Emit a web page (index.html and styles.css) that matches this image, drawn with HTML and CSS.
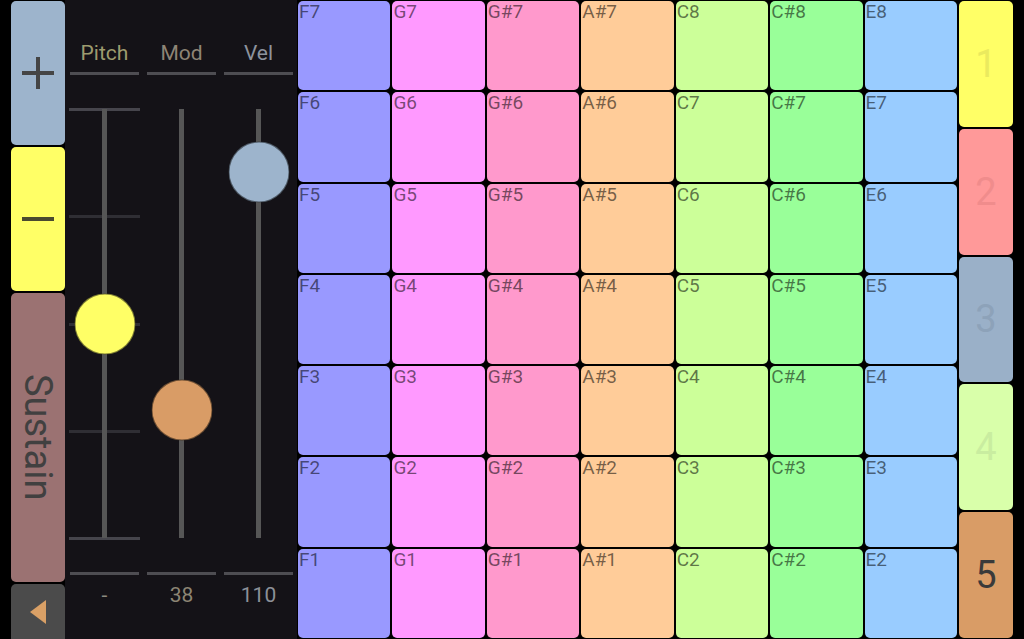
FILE: index.html
```html
<!DOCTYPE html>
<html>
<head>
<meta charset="utf-8">
<link rel="stylesheet" href="styles.css">
</head>
<body>
<div class="app">
  <div class="left-col">
    <div class="btn btn-plus"><span class="plus-h"></span><span class="plus-v"></span></div>
    <div class="btn btn-minus"><span class="minus-h"></span></div>
    <div class="btn btn-sustain"><span class="sustain-label">Sustain</span></div>
    <div class="btn btn-back"><svg width="18" height="26" viewBox="0 0 18 26"><polygon points="1,13 17,1 17,25" fill="#d9a066"/></svg></div>
  </div>

  <div class="panel">
    <div class="scol scol-pitch">
      <div class="shead">Pitch</div>
      <div class="sline"></div>
      <div class="sarea">
        <div class="strack">
          <div class="tick tick-end" style="top:0%"></div>
          <div class="tick" style="top:25%"></div>
          <div class="tick" style="top:50%"></div>
          <div class="tick" style="top:75%"></div>
          <div class="tick tick-end" style="top:100%"></div>
          <div class="sbar"></div>
          <div class="knob knob-pitch" style="top:50%"></div>
        </div>
      </div>
      <div class="sline"></div>
      <div class="sval">-</div>
    </div>
    <div class="scol scol-mod">
      <div class="shead">Mod</div>
      <div class="sline"></div>
      <div class="sarea">
        <div class="strack">
          <div class="sbar"></div>
          <div class="knob knob-mod" style="top:70.1%"></div>
        </div>
      </div>
      <div class="sline"></div>
      <div class="sval">38</div>
    </div>
    <div class="scol scol-vel">
      <div class="shead">Vel</div>
      <div class="sline"></div>
      <div class="sarea">
        <div class="strack">
          <div class="sbar"></div>
          <div class="knob knob-vel" style="top:14.6%"></div>
        </div>
      </div>
      <div class="sline"></div>
      <div class="sval">110</div>
    </div>
  </div>

  <div class="grid">
    <div class="pad c-f">F7</div><div class="pad c-g">G7</div><div class="pad c-gs">G#7</div><div class="pad c-as">A#7</div><div class="pad c-c">C8</div><div class="pad c-cs">C#8</div><div class="pad c-e">E8</div>
    <div class="pad c-f">F6</div><div class="pad c-g">G6</div><div class="pad c-gs">G#6</div><div class="pad c-as">A#6</div><div class="pad c-c">C7</div><div class="pad c-cs">C#7</div><div class="pad c-e">E7</div>
    <div class="pad c-f">F5</div><div class="pad c-g">G5</div><div class="pad c-gs">G#5</div><div class="pad c-as">A#5</div><div class="pad c-c">C6</div><div class="pad c-cs">C#6</div><div class="pad c-e">E6</div>
    <div class="pad c-f">F4</div><div class="pad c-g">G4</div><div class="pad c-gs">G#4</div><div class="pad c-as">A#4</div><div class="pad c-c">C5</div><div class="pad c-cs">C#5</div><div class="pad c-e">E5</div>
    <div class="pad c-f">F3</div><div class="pad c-g">G3</div><div class="pad c-gs">G#3</div><div class="pad c-as">A#3</div><div class="pad c-c">C4</div><div class="pad c-cs">C#4</div><div class="pad c-e">E4</div>
    <div class="pad c-f">F2</div><div class="pad c-g">G2</div><div class="pad c-gs">G#2</div><div class="pad c-as">A#2</div><div class="pad c-c">C3</div><div class="pad c-cs">C#3</div><div class="pad c-e">E3</div>
    <div class="pad c-f">F1</div><div class="pad c-g">G1</div><div class="pad c-gs">G#1</div><div class="pad c-as">A#1</div><div class="pad c-c">C2</div><div class="pad c-cs">C#2</div><div class="pad c-e">E2</div>
  </div>

  <div class="right-col">
    <div class="rbtn r1">1</div>
    <div class="rbtn r2">2</div>
    <div class="rbtn r3">3</div>
    <div class="rbtn r4">4</div>
    <div class="rbtn r5">5</div>
  </div>
</div>
</body>
</html>
```

FILE: styles.css
```css
* { box-sizing: border-box; }
html, body {
  margin: 0;
  padding: 0;
  background: #000;
  font-family: Roboto, "Liberation Sans", sans-serif;
}
.app {
  display: flex;
  width: 1024px;
  height: 639px;
  overflow: hidden;
  background: #000;
}

/* left column */
.left-col {
  width: 54px;
  margin-left: 11px;
  padding-top: 1px;
  display: flex;
  flex-direction: column;
  gap: 2px;
  flex: 0 0 auto;
}
.btn {
  border-radius: 5px;
  display: flex;
  align-items: center;
  justify-content: center;
  position: relative;
}
.btn-plus { height: 144px; background: #9db4cc; }
.btn-minus { height: 144px; background: #ffff66; }
.btn-sustain { height: 289px; background: #9b7272; }
.btn-back { flex: 1; background: #4b4b4b; border-radius: 5px 5px 0 0; }
.btn-back svg { display: block; }

.plus-h, .minus-h {
  position: absolute;
  left: 11px;
  width: 32px;
  height: 4px;
  top: 50%;
  margin-top: -2px;
  background: #454545;
}
.minus-h { background: #4a4a30; }
.plus-v {
  position: absolute;
  left: 50%;
  margin-left: -2px;
  width: 4px;
  height: 32px;
  top: 50%;
  margin-top: -16px;
  background: #454545;
}
.sustain-label {
  writing-mode: vertical-rl;
  font-size: 38px;
  color: #414040;
  line-height: 1;
}

/* slider panel */
.panel {
  width: 232px;
  flex: 0 0 auto;
  background: #141217;
  display: flex;
  padding-left: 1px;
}
.scol {
  width: 77px;
  display: flex;
  flex-direction: column;
}
.shead {
  height: 72px;
  display: flex;
  align-items: flex-end;
  justify-content: center;
  padding-bottom: 7px;
  font-size: 21px;
  line-height: 24px;
}
.sline {
  height: 3px;
  margin: 0 4px;
  background: #4e4d52;
}
.sarea {
  height: 497px;
  padding: 34px 0;
}
.strack {
  position: relative;
  height: 429px;
}
.sbar {
  position: absolute;
  left: 50%;
  margin-left: -2.5px;
  width: 5px;
  top: 0;
  bottom: 0;
  background: #565656;
}
.tick {
  position: absolute;
  left: 3px;
  right: 3px;
  height: 3px;
  margin-top: -1px;
  background: #2f2e34;
}
.tick-end { background: #46454c; }
.knob {
  position: absolute;
  left: 50%;
  width: 61px;
  height: 61px;
  border-radius: 50%;
  transform: translate(-50%, -50%);
  border: 1px solid rgba(0, 0, 0, 0.5);
}
.knob-pitch { background: #ffff66; }
.knob-mod { background: #d99c66; }
.knob-vel { background: #9db4cc; }
.sval {
  margin-top: 8px;
  text-align: center;
  font-size: 21px;
  line-height: 24px;
}
.scol-pitch .shead { color: #9d9b6e; }
.scol-mod .shead { color: #8e8475; }
.scol-vel .shead { color: #8d939d; }
.scol-pitch .sval { color: #8c8b80; }
.scol-mod .sval { color: #8c8474; }
.scol-vel .sval { color: #8c9098; }

/* pad grid */
.grid {
  width: 661px;
  flex: 0 0 auto;
  display: grid;
  grid-template-columns: repeat(7, 1fr);
  grid-template-rows: repeat(7, 1fr);
  gap: 2px;
  padding: 1px;
  background: #000;
}
.pad {
  border-radius: 5px;
  font-size: 19px;
  line-height: 22px;
  padding: 0 0 0 1px;
  color: rgba(0, 0, 0, 0.55);
}
.c-f { background: #9999ff; }
.c-g { background: #ff99ff; }
.c-gs { background: #ff99cc; }
.c-as { background: #ffcc99; }
.c-c { background: #ccff99; }
.c-cs { background: #99ff99; }
.c-e { background: #99ccff; }

/* right column */
.right-col {
  width: 54px;
  margin-left: 1px;
  flex: 0 0 auto;
  display: flex;
  flex-direction: column;
  gap: 2px;
  padding: 1px 0;
}
.rbtn {
  flex: 1;
  border-radius: 5px;
  display: flex;
  align-items: center;
  justify-content: center;
  font-size: 38px;
}
.r1 { background: #ffff66; color: #eaea5e; }
.r2 { background: #ff9999; color: #f08c8c; }
.r3 { background: #9ab0c8; color: #8da2b9; }
.r4 { background: #d9ffaa; color: #c9eda0; }
.r5 { background: #d99c66; color: #3a3a3a; }
```
